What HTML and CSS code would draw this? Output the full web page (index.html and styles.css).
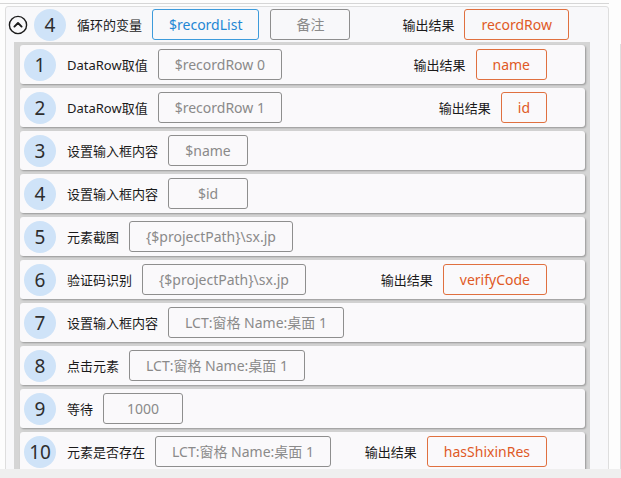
FILE: index.html
```html
<!DOCTYPE html>
<html lang="zh-CN">
<head>
    <meta charset="UTF-8">
    <meta name="viewport" content="width=device-width, initial-scale=1.0">
    <title>循环步骤</title>
    <link rel="stylesheet" href="styles.css">
</head>
<body>
    <div class="screen">
        <div class="main">
            <div class="prev-edge"></div>
            <div class="loop">
                <div class="loop-head">
                    <span class="toggle">
                        <svg width="20" height="20" viewBox="0 0 20 20">
                            <circle cx="10" cy="10" r="8.6" fill="none" stroke="#1b1b1b" stroke-width="1.4"/>
                            <path d="M6.4 11.6 L10 8 L13.6 11.6" fill="none" stroke="#1b1b1b" stroke-width="1.9" stroke-linecap="round" stroke-linejoin="round"/>
                        </svg>
                    </span>
                    <span class="num">4</span>
                    <span class="label">循环的变量</span>
                    <span class="box box-blue">$recordList</span>
                    <span class="box box-gray">备注</span>
                    <span class="out">
                        <span class="label">输出结果</span>
                        <span class="box box-orange">recordRow</span>
                    </span>
                </div>
                <div class="loop-body">
                    <div class="step">
                        <span class="num">1</span>
                        <span class="label">DataRow取值</span>
                        <span class="box box-gray">$recordRow 0</span>
                        <span class="out"><span class="label">输出结果</span><span class="box box-orange">name</span></span>
                    </div>
                    <div class="step">
                        <span class="num">2</span>
                        <span class="label">DataRow取值</span>
                        <span class="box box-gray">$recordRow 1</span>
                        <span class="out"><span class="label">输出结果</span><span class="box box-orange">id</span></span>
                    </div>
                    <div class="step">
                        <span class="num">3</span>
                        <span class="label">设置输入框内容</span>
                        <span class="box box-gray">$name</span>
                    </div>
                    <div class="step">
                        <span class="num">4</span>
                        <span class="label">设置输入框内容</span>
                        <span class="box box-gray">$id</span>
                    </div>
                    <div class="step">
                        <span class="num">5</span>
                        <span class="label">元素截图</span>
                        <span class="box box-gray">{$projectPath}\sx.jp</span>
                    </div>
                    <div class="step">
                        <span class="num">6</span>
                        <span class="label">验证码识别</span>
                        <span class="box box-gray">{$projectPath}\sx.jp</span>
                        <span class="out"><span class="label">输出结果</span><span class="box box-orange">verifyCode</span></span>
                    </div>
                    <div class="step">
                        <span class="num">7</span>
                        <span class="label">设置输入框内容</span>
                        <span class="box box-gray">LCT:窗格 Name:桌面 1</span>
                    </div>
                    <div class="step">
                        <span class="num">8</span>
                        <span class="label">点击元素</span>
                        <span class="box box-gray">LCT:窗格 Name:桌面 1</span>
                    </div>
                    <div class="step">
                        <span class="num">9</span>
                        <span class="label">等待</span>
                        <span class="box box-gray">1000</span>
                    </div>
                    <div class="step">
                        <span class="num">10</span>
                        <span class="label">元素是否存在</span>
                        <span class="box box-gray">LCT:窗格 Name:桌面 1</span>
                        <span class="out"><span class="label">输出结果</span><span class="box box-orange">hasShixinRes</span></span>
                    </div>
                </div>
            </div>
        </div>
        <div class="gutter"></div>
    </div>
    <div class="hscroll"></div>
</body>
</html>
```

FILE: styles.css
```css
body {
    margin: 0;
    background-color: #fdfdfd;
    font-family: "Noto Sans", "Noto Sans CJK SC", sans-serif;
    color: #1a1a1a;
}

.screen {
    display: flex;
    height: 469px;
    overflow: hidden;
}

.main {
    width: 609px;
    flex-shrink: 0;
}

.prev-edge {
    height: 3px;
    border-bottom: 1px solid #d6d6d6;
}

.gutter {
    width: 11px;
    margin-top: 44px;
    border-right: 1px solid #dedede;
}

.hscroll {
    height: 9px;
    background-color: #efefef;
}

.loop {
    margin: 2px 0 0 5px;
    border: 1px solid #dedede;
    border-radius: 3px;
    background-color: #f8f8fa;
}

.loop-head {
    display: flex;
    align-items: center;
    height: 35px;
    padding: 0 39px 0 2px;
}

.toggle {
    display: flex;
    width: 20px;
    height: 20px;
    margin-right: 6px;
}

.num {
    display: flex;
    align-items: center;
    justify-content: center;
    flex-shrink: 0;
    width: 32px;
    height: 32px;
    border-radius: 50%;
    background-color: #cfe3f8;
    color: #2e2e2e;
    font-size: 19px;
    margin-right: 11px;
}

.label {
    font-size: 13px;
    white-space: nowrap;
    margin-right: 10px;
}

.box {
    box-sizing: border-box;
    height: 31px;
    line-height: 29px;
    min-width: 80px;
    padding: 0 16px;
    border: 1px solid #8e8e8e;
    border-radius: 3px;
    font-size: 14px;
    text-align: center;
    white-space: nowrap;
}

.loop-head .box {
    margin-right: 11px;
}

.box-gray {
    color: #8a8a8a;
}

.box-blue {
    border-color: #3d9bdb;
    color: #1f87d4;
}

.box-orange {
    min-width: 0;
    border-color: #e0703f;
    color: #e05a26;
}

.out {
    display: flex;
    align-items: center;
    margin-left: auto;
}

.loop-head .out .box {
    margin-right: 0;
}

.loop-body {
    display: flex;
    flex-direction: column;
    gap: 4px;
    width: 565px;
    margin-left: 8px;
    padding: 3px 5px 0 6px;
    background-color: #d5d5d5;
}

.step {
    display: flex;
    align-items: center;
    height: 39px;
    padding: 0 38px 0 4px;
    border-radius: 3px;
    background-color: #faf9fb;
    box-shadow: 1px 1px 2px rgba(0, 0, 0, 0.3);
}
```
